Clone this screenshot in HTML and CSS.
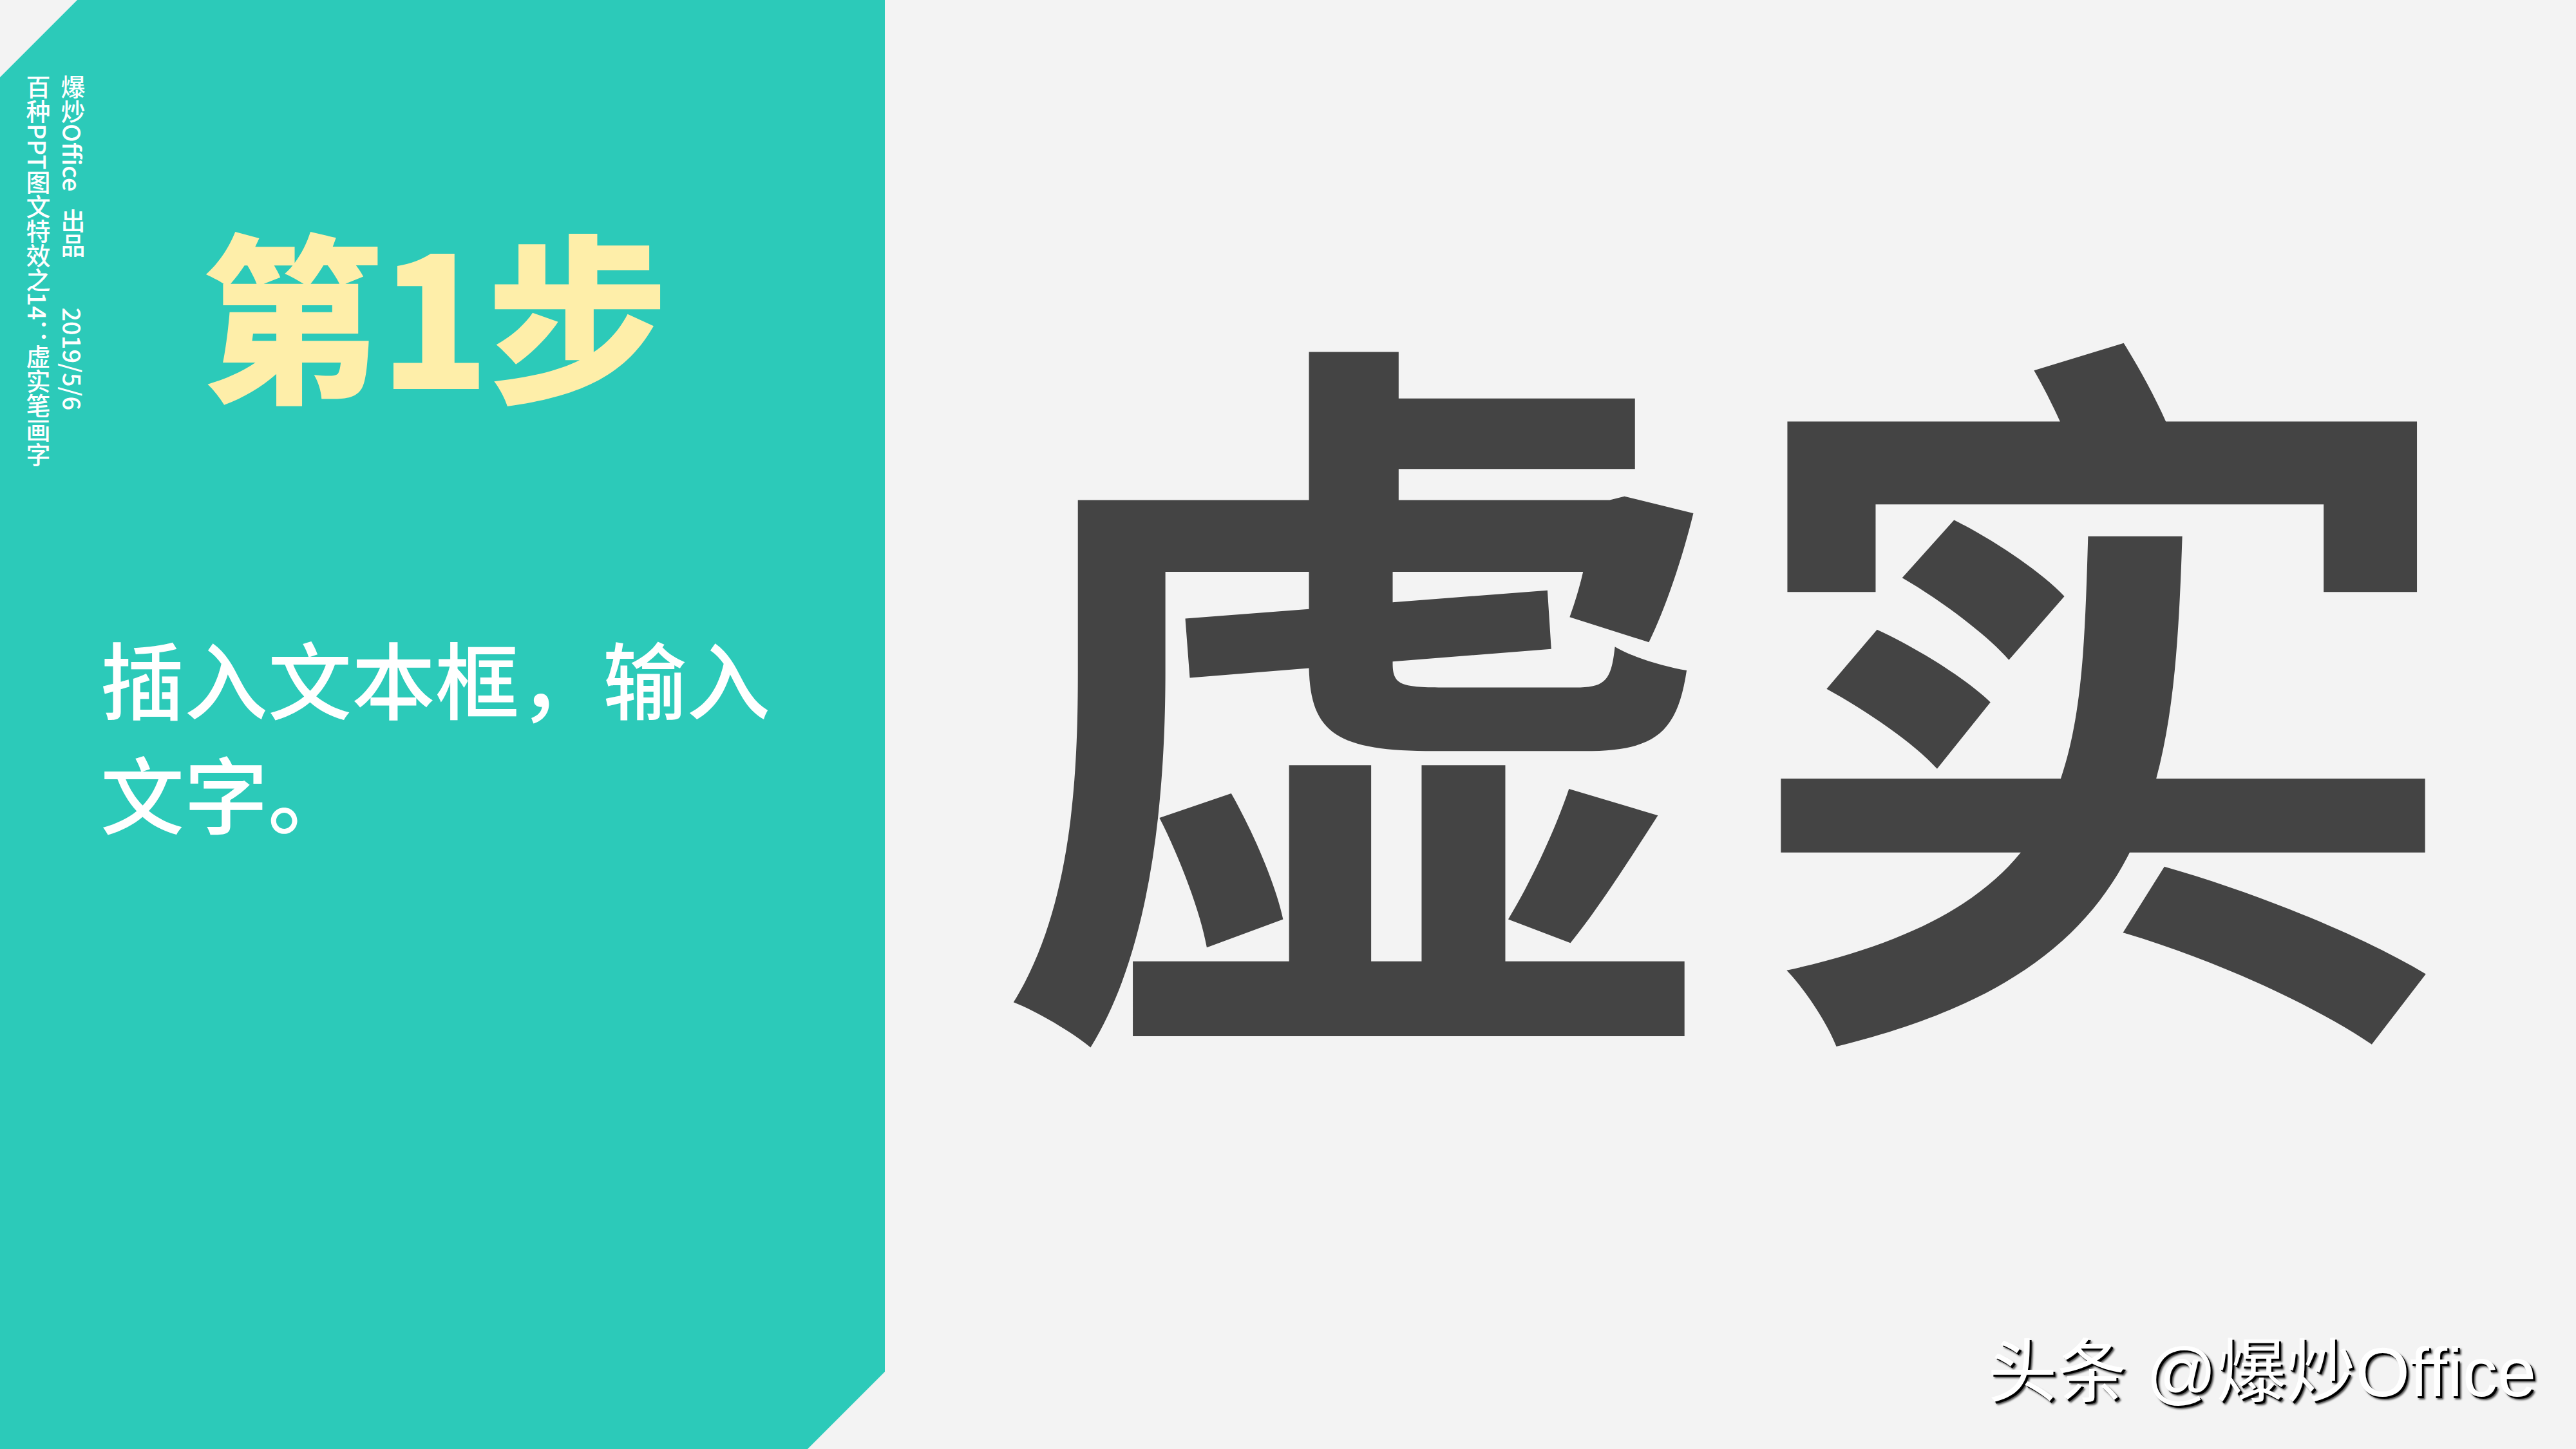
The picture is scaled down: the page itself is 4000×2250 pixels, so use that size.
FILE: index.html
```html
<!DOCTYPE html>
<html lang="zh-CN">
<head>
<meta charset="utf-8">
<title>第1步 虚实</title>
<link rel="stylesheet" href="styles.css">
</head>
<body>
<div class="slide">
  <aside class="panel">
    <div class="meta">
      <span class="meta-line">爆炒Office<span class="meta-space"></span>出品<span class="meta-gap"></span>2019/5/6</span>
      <span class="meta-line">百种PPT图文特效之14：虚实笔画字</span>
    </div>
    <div class="panel-body">
      <h1 class="step">第1步</h1>
      <p class="desc">插入文本框，输入文字。</p>
    </div>
  </aside>
  <main class="stage">
    <div class="big">虚实</div>
  </main>
  <div class="watermark">头条 @爆炒Office</div>
</div>
</body>
</html>
```

FILE: styles.css
```css
html, body {
  margin: 0;
  padding: 0;
}
body {
  background: #f3f3f3;
  font-family: "Noto Sans CJK SC", "Noto Sans", sans-serif;
}
.slide {
  position: relative;
  width: 4000px;
  height: 2250px;
  display: flex;
  overflow: hidden;
  background: #f3f3f3;
}
.panel {
  width: 1374px;
  flex: 0 0 1374px;
  background: #2ccab9;
  clip-path: polygon(120px 0, 100% 0, 100% calc(100% - 120px), calc(100% - 120px) 100%, 0 100%, 0 120px);
  display: flex;
  align-items: flex-start;
}
.meta {
  writing-mode: vertical-rl;
  text-orientation: mixed;
  color: #ffffff;
  font-size: 38px;
  font-weight: 500;
  line-height: 54px;
  padding-top: 116px;
  margin-left: 32px;
  display: flex;
  flex-direction: column;
}
.meta-line {
  display: block;
}
.meta-space {
  display: inline-block;
  height: 26px;
}
.meta-gap {
  display: inline-block;
  height: 78px;
}
.panel-body {
  display: flex;
  flex-direction: column;
  margin-left: 16px;
}
.step {
  margin: 340px 0 0 156px;
  color: #feeea9;
  font-size: 282px;
  font-weight: 900;
  line-height: 1;
  letter-spacing: -5px;
}
.desc {
  margin: 339px 0 0 0;
  color: #ffffff;
  font-size: 130px;
  font-weight: 500;
  line-height: 178px;
  width: 1100px;
}
.stage {
  flex: 1;
  display: flex;
  align-items: center;
  justify-content: center;
}
.big {
  color: #444444;
  font-size: 1150px;
  font-weight: 700;
  line-height: 1;
  margin-top: -204px;
  white-space: nowrap;
}
.watermark {
  position: absolute;
  right: 62px;
  bottom: 65px;
  color: #ffffff;
  font-family: "Liberation Sans", "Noto Sans CJK SC", sans-serif;
  font-size: 108px;
  line-height: 1;
  text-shadow: 3px 3px 0 #000000, 5px 5px 3px rgba(0,0,0,0.7);
}
```
